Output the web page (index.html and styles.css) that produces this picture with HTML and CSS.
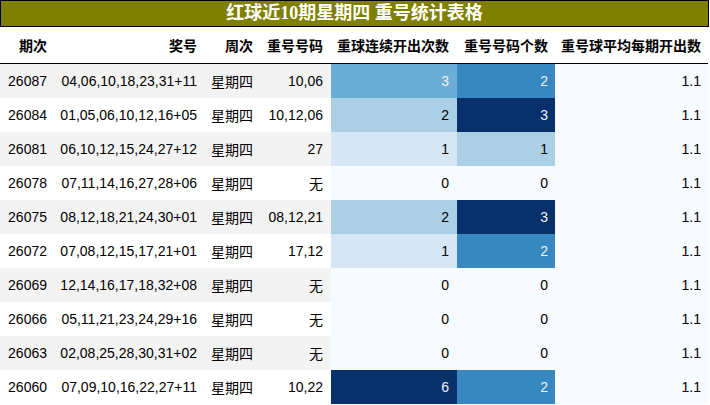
FILE: index.html
```html
<!DOCTYPE html>
<html lang="zh">
<head>
<meta charset="utf-8">
<title>红球近10期星期四 重号统计表格</title>
<link rel="stylesheet" href="styles.css">
</head>
<body>
<div class="title">红球近10期星期四 重号统计表格</div>
<table class="stats">
  <colgroup>
    <col class="c1"><col class="c2"><col class="c3"><col class="c4"><col class="c5"><col class="c6"><col class="c7">
  </colgroup>
  <thead>
    <tr><th>期次</th><th>奖号</th><th>周次</th><th>重号号码</th><th>重球连续开出次数</th><th>重号号码个数</th><th>重号球平均每期开出数</th></tr>
  </thead>
  <tbody>
    <tr><td>26087</td><td>04,06,10,18,23,31+11</td><td>星期四</td><td>10,06</td><td class="b3 light">3</td><td class="b67 light">2</td><td class="b0">1.1</td></tr>
    <tr><td>26084</td><td>01,05,06,10,12,16+05</td><td>星期四</td><td>10,12,06</td><td class="b33">2</td><td class="b100 light">3</td><td class="b0">1.1</td></tr>
    <tr><td>26081</td><td>06,10,12,15,24,27+12</td><td>星期四</td><td>27</td><td class="b17">1</td><td class="b33">1</td><td class="b0">1.1</td></tr>
    <tr><td>26078</td><td>07,11,14,16,27,28+06</td><td>星期四</td><td>无</td><td class="b0">0</td><td class="b0">0</td><td class="b0">1.1</td></tr>
    <tr><td>26075</td><td>08,12,18,21,24,30+01</td><td>星期四</td><td>08,12,21</td><td class="b33">2</td><td class="b100 light">3</td><td class="b0">1.1</td></tr>
    <tr><td>26072</td><td>07,08,12,15,17,21+01</td><td>星期四</td><td>17,12</td><td class="b17">1</td><td class="b67 light">2</td><td class="b0">1.1</td></tr>
    <tr><td>26069</td><td>12,14,16,17,18,32+08</td><td>星期四</td><td>无</td><td class="b0">0</td><td class="b0">0</td><td class="b0">1.1</td></tr>
    <tr><td>26066</td><td>05,11,21,23,24,29+16</td><td>星期四</td><td>无</td><td class="b0">0</td><td class="b0">0</td><td class="b0">1.1</td></tr>
    <tr><td>26063</td><td>02,08,25,28,30,31+02</td><td>星期四</td><td>无</td><td class="b0">0</td><td class="b0">0</td><td class="b0">1.1</td></tr>
    <tr><td>26060</td><td>07,09,10,16,22,27+11</td><td>星期四</td><td>10,22</td><td class="b100 light">6</td><td class="b67 light">2</td><td class="b0">1.1</td></tr>
  </tbody>
</table>
</body>
</html>
```

FILE: styles.css
```css
html, body {
  margin: 0;
  padding: 0;
  background: #ffffff;
}

.title {
  box-sizing: border-box;
  width: 709px;
  height: 27px;
  border: 1px solid #000000;
  background: #808000;
  color: #ffffff;
  font-family: "Liberation Serif", "Noto Sans CJK SC", serif;
  font-weight: bold;
  font-size: 18px;
  line-height: 24px;
  text-align: center;
}

.stats {
  border-collapse: collapse;
  table-layout: fixed;
  width: 708px;
  font-family: "Liberation Sans", "Noto Sans CJK SC", sans-serif;
  font-size: 14px;
  color: #000000;
}

.c1 { width: 55px; }
.c2 { width: 150px; }
.c3 { width: 56px; }
.c4 { width: 70px; }
.c5 { width: 126px; }
.c6 { width: 98px; }
.c7 { width: 153px; }

.stats th {
  height: 36px;
  padding: 0 8px 0 0;
  text-align: right;
  font-weight: bold;
  border-bottom: 1px solid #000000;
  white-space: nowrap;
  background: #ffffff;
}

.stats td {
  height: 34px;
  padding: 0 8px 0 0;
  text-align: right;
  white-space: nowrap;
}

.stats th:nth-child(6), .stats td:nth-child(6) { padding-right: 7px; }
.stats th:nth-child(7), .stats td:nth-child(7) { padding-right: 7px; }

.stats tbody tr:nth-child(odd) { background: #f3f3f3; }
.stats tbody tr:nth-child(even) { background: #ffffff; }

.stats td.b0 { background: #f7fbff; }
.stats td.b17 { background: #d6e6f4; }
.stats td.b33 { background: #abd0e6; }
.stats td.b3 { background: #6aaed6; }
.stats td.b67 { background: #3787c0; }
.stats td.b100 { background: #08306b; }
.stats td.light { color: #f1f1f1; }
```
